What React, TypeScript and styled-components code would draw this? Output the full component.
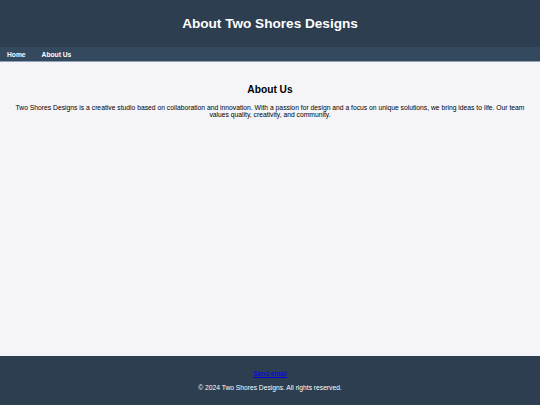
import styled, { createGlobalStyle } from 'styled-components';

const GlobalStyle = createGlobalStyle`
  html, body {
    margin: 0;
    padding: 0;
  }
  body {
    font-family: 'Liberation Sans', Arial, sans-serif;
    background: #f4f4f9;
    color: #000;
  }
`;

const Page = styled.div`
  min-height: 100vh;
  display: flex;
  flex-direction: column;
`;

const Header = styled.header`
  background: #2c3e50;
  color: #fff;
  height: 47px;
  display: flex;
  align-items: center;
  justify-content: center;
  h1 {
    margin: 0;
    font-size: 13.6px;
    font-weight: bold;
  }
`;

const Nav = styled.nav`
  background: #34495e;
  height: 14px;
  display: flex;
  align-items: center;
  gap: 16px;
  padding: 0 7px;
  border-bottom: 1px solid #8fa3b8;
  a {
    color: #fff;
    font-size: 6.7px;
    font-weight: bold;
    text-decoration: none;
  }
`;

const Main = styled.main`
  flex: 1;
  padding: 22px 10px;
  text-align: center;
  h2 {
    margin: 0 0 9px;
    font-size: 10.2px;
    font-weight: bold;
  }
  p {
    margin: 0;
    font-size: 6.75px;
    line-height: 7.2px;
  }
`;

const Footer = styled.footer`
  background: #2c3e50;
  color: #fff;
  height: 49px;
  display: flex;
  flex-direction: column;
  align-items: center;
  justify-content: center;
  gap: 7px;
  font-size: 6.7px;
  a {
    color: #0000ee;
  }
  p {
    margin: 0;
  }
`;

export default function App() {
  return (
    <>
      <GlobalStyle />
      <Page>
        <Header>
          <h1>About Two Shores Designs</h1>
        </Header>
        <Nav>
          <a href='#'>Home</a>
          <a href='#'>About Us</a>
        </Nav>
        <Main>
          <h2>About Us</h2>
          <p>
            Two Shores Designs is a creative studio based on collaboration and
            innovation. With a passion for design and a focus on unique
            solutions, we bring ideas to life. Our team values quality,
            creativity, and community.
          </p>
        </Main>
        <Footer>
          <a href='#'>Send email</a>
          <p>&copy; 2024 Two Shores Designs. All rights reserved.</p>
        </Footer>
      </Page>
    </>
  );
}
